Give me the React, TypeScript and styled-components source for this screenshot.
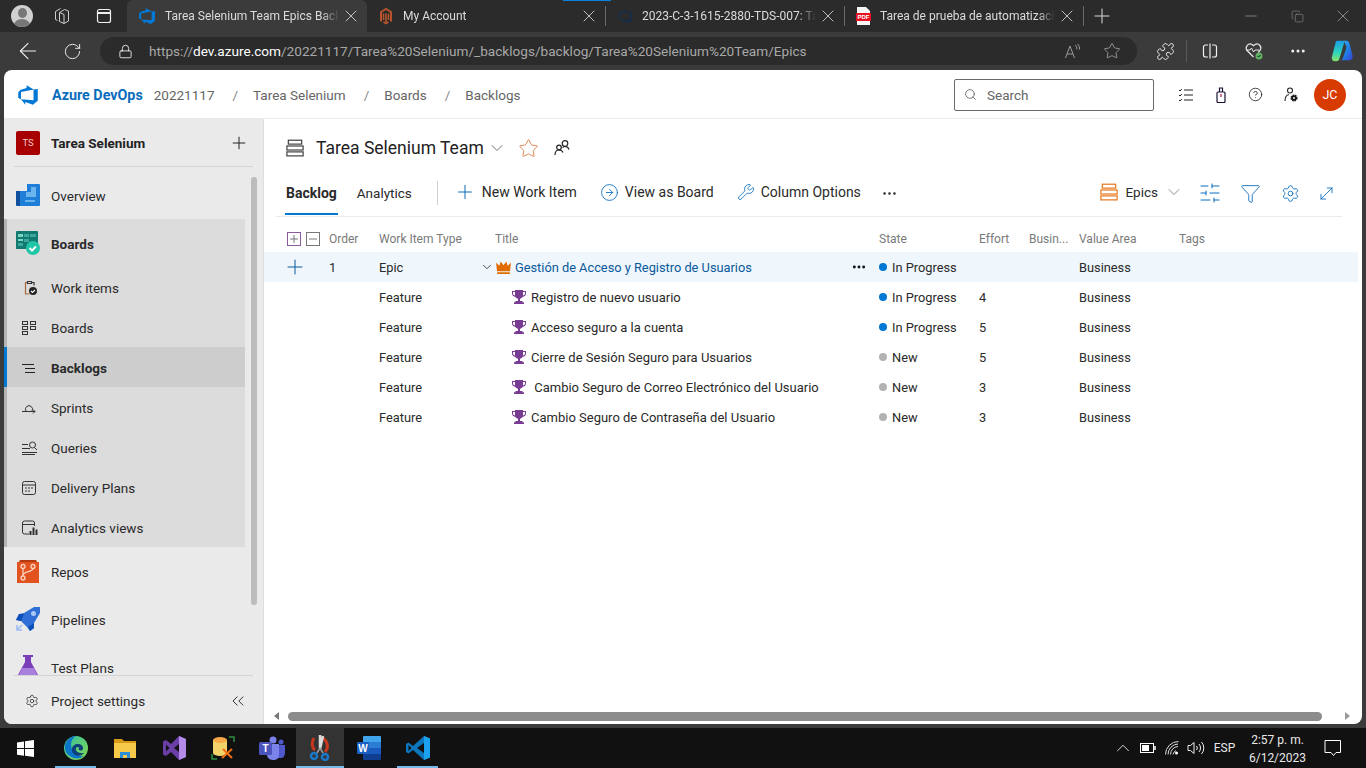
import { ReactNode } from "react";
import styled, { createGlobalStyle } from "styled-components";
import {
  ArrowLeft,
  ChevronDown,
  ChevronsLeft,
  ChevronUp,
  CircleArrowRight,
  CircleHelp,
  Copy,
  Ellipsis,
  Funnel,
  Lock,
  Minus,
  MoveDiagonal,
  Plus,
  Puzzle,
  RotateCw,
  Search,
  Settings,
  SlidersHorizontal,
  Star,
  Wrench,
  X,
} from "lucide-react";

const FONT = `Roboto, "Liberation Sans", sans-serif`;

const GlobalStyle = createGlobalStyle`
  html, body { margin: 0; padding: 0; background: #3b3b3b; }
  * { box-sizing: border-box; }
  body { font-family: ${FONT}; font-size: 13px; overflow: hidden; }
`;

const LOGO =
  "M17 4v9.74l-4 3.28-6.2-2.26V17l-3.51-4.59 10.23.8V4.44zm-3.41.49L7.85 1v2.29L2.58 4.84 1 6.87v4.61l2.26 1V6.57z";

const AzureLogo = ({ size = 18, color = "#0078d4" }: any) => (
  <svg width={size} height={size} viewBox="0 0 18 18" style={{ flex: "none" }}>
    <path fill={color} d={LOGO} />
  </svg>
);

const MagentoIcon = () => (
  <svg width="16" height="18" viewBox="0 0 16 18" style={{ flex: "none" }}>
    <path fill="none" stroke="#b5532c" strokeWidth="2" d="M3 14.500V5l5-3 5 3v9.500" />
    <path fill="none" stroke="#b5532c" strokeWidth="1.600" d="M8 16.500V6.500M5.500 13V6.500M10.500 13V6.500M5.500 15l2.500 1.500 2.500-1.500" />
  </svg>
);

const PdfIcon = () => (
  <svg width="15" height="18" viewBox="0 0 15 18" style={{ flex: "none" }}>
    <path fill="#f5f5f5" d="M1 0h9l4 4v14H1z" />
    <rect x="0" y="6" width="15" height="8" fill="#e81123" />
    <text x="7.500" y="12.300" fontSize="6" fontWeight="700" fill="#fff" textAnchor="middle" fontFamily="Liberation Sans">PDF</text>
  </svg>
);

const WorkspaceIcon = () => (
  <svg width="18" height="18" viewBox="0 0 18 18" fill="none" stroke="#cfcfcf" strokeWidth="1">
    <path d="M6.500 5.500l5-3 4 1.500v10l-4.500 2.500-4.500-2z" />
    <path d="M6.500 5.500l4.500 2v9M4.500 13.500l-2-1v-8l5-3" />
  </svg>
);

const TabsIcon = () => (
  <svg width="16" height="16" viewBox="0 0 16 16" fill="none" stroke="#f0f0f0" strokeWidth="1.200">
    <rect x="1.500" y="1.500" width="13" height="13" rx="2" />
    <path d="M2 5h12" strokeWidth="2" />
  </svg>
);

const ReadAloudIcon = () => (
  <svg width="18" height="16" viewBox="0 0 18 16" fill="none" stroke="#9a9a9a" strokeWidth="1">
    <path d="M1.500 15L6 3l4.500 12M3 11h6" />
    <path d="M11 2c1.500 1 2 2.500 1.800 4.500M13.500 1c1.700 1.500 2.300 3.500 2 5.500" />
  </svg>
);

const SplitIcon = () => (
  <svg width="16" height="16" viewBox="0 0 16 16" fill="none" stroke="#f0f0f0" strokeWidth="1.200">
    <path d="M6 2H3.500a2 2 0 0 0-2 2v8a2 2 0 0 0 2 2H6M10 2h2.500a2 2 0 0 1 2 2v8a2 2 0 0 1-2 2H10M8 0.500v15" />
  </svg>
);

const HeartCheckIcon = () => (
  <svg width="20" height="20" viewBox="0 0 20 20" fill="none">
    <path stroke="#e8e8e8" strokeWidth="1.200" d="M9.500 16L3 9.500C.5 6 4.500 1.500 8 3.500l1.500 1.200L11 3.500c3.500-2 7.500 2 5 6l-2 2" />
    <path stroke="#e8e8e8" strokeWidth="1" d="M2 9h4l1.500-2 2 4 1.500-2h4" />
    <circle cx="15" cy="15" r="3.500" fill="#5fb15f" />
    <path stroke="#123" strokeWidth="1" d="M13.500 15l1 1 2-2" />
  </svg>
);

const CopilotIcon = () => (
  <svg width="24" height="24" viewBox="0 0 26 26">
    <defs>
      <linearGradient id="copA" x1="0" y1="0" x2="0" y2="1">
        <stop offset="0" stopColor="#1b9de8" />
        <stop offset="0.6" stopColor="#2fd6b8" />
        <stop offset="1" stopColor="#8be06a" />
      </linearGradient>
      <linearGradient id="copB" x1="0" y1="0" x2="1" y2="1">
        <stop offset="0" stopColor="#35b8f5" />
        <stop offset="0.55" stopColor="#1e7fe8" />
        <stop offset="1" stopColor="#3a3fd0" />
      </linearGradient>
    </defs>
    <path fill="url(#copA)" d="M8 2h8L10 22c-.5 1.500-1.500 2-3 2H5c-2 0-3.500-1.800-3-4L6 4c.3-1.200 1-2 2-2z" />
    <path fill="url(#copB)" d="M15 2h3c1.500 0 2.500 1 3 2.500l3.500 14c.5 2.500-1 4.500-3.500 4.500h-10c1.500 0 2.500-1 3-2.500L18 9z" />
  </svg>
);

const ProgressIcon = () => (
  <svg width="16" height="14" viewBox="0 0 16 14" fill="none" stroke="#222" strokeWidth="1">
    <path d="M1 2l1 1 1.800-2M1 7l1 1 1.800-2M1 12l1 1 1.800-2" />
    <path d="M6 2h9M6 7h9M6 12h9" strokeWidth="1.200" />
  </svg>
);

const BagIcon = () => (
  <svg width="12" height="16" viewBox="0 0 12 16" fill="none" stroke="#1a1030" strokeWidth="1.200">
    <rect x="2" y="5" width="8" height="10.500" rx="1" />
    <path d="M4.500 5V1h3v4" />
    <path d="M6 7v3" stroke="#b01048" />
  </svg>
);

const UserGearIcon = () => (
  <svg width="16" height="16" viewBox="0 0 16 16" fill="none" stroke="#222" strokeWidth="1.100">
    <circle cx="7" cy="3.500" r="2.500" />
    <path d="M6 7.500C3 8 2 10.500 2 14" />
    <circle cx="11" cy="11" r="2.800" fill="#111" strokeWidth="1.600" strokeDasharray="1.500 .8" />
    <circle cx="11" cy="11" r="1" fill="#fff" stroke="none" />
  </svg>
);

const BacklogIcon = ({ color = "#444", size = 20 }: any) => (
  <svg width={size} height={size} viewBox="0 0 18 18" fill="none" stroke={color} strokeWidth="1.100">
    <rect x="3" y="2" width="12" height="3.500" />
    <rect x="1.700" y="7.200" width="14.600" height="3.600" />
    <rect x="1.700" y="12.500" width="14.600" height="3.600" />
  </svg>
);

const PeopleIcon = () => (
  <svg width="18" height="18" viewBox="0 0 18 18" fill="none" stroke="#222" strokeWidth="1.200">
    <circle cx="12" cy="4.500" r="2.800" />
    <circle cx="6" cy="8.500" r="2.300" />
    <path d="M2 16c0-3 1.500-5 4-5s3.500 1 4 2.500M9.500 8.500c.8-.6 1.600-1 2.500-1 2 0 3.500 1 4 3" />
  </svg>
);

const BoxIcon = ({ kind }: { kind: "plus" | "minus" }) => (
  <svg width="14" height="14" viewBox="0 0 14 14" fill="none">
    <rect x=".5" y=".5" width="13" height="13" stroke={kind === "plus" ? "#8a5a9c" : "#777"} />
    <path stroke="#777" d={kind === "plus" ? "M3 7h8M7 3v8" : "M3 7h8"} />
  </svg>
);

const CrownIcon = () => (
  <svg width="15" height="13" viewBox="0 0 16 14" style={{ flex: "none" }}>
    <path fill="#e06c00" d="M0 2l3.500 3L5 .5l3 4 3-4 1.500 4.500L16 2l-1 9H1zM1.200 12h13.600v2H1.200z" />
  </svg>
);

const TrophyIcon = () => (
  <svg width="14" height="14" viewBox="0 0 14 14" style={{ flex: "none" }}>
    <path fill="#773b93" d="M3 0h8v1h3v2.500C14 5.500 12.500 6.500 10.800 6.700 10.200 7.800 9.200 8.500 8 8.800V11h2.500v1.200H12V14H2v-1.800h1.500V11H6V8.800C4.800 8.500 3.800 7.800 3.200 6.700 1.500 6.500 0 5.500 0 3.500V1h3zM1 2v1.500C1 4.500 1.800 5.300 3 5.600V2zm10 0v3.600c1.200-.3 2-1.100 2-2.100V2z" />
  </svg>
);

const ClipCheckIcon = () => (
  <svg width="16" height="16" viewBox="0 0 16 16" fill="none">
    <path stroke="#a6683a" strokeWidth="1.200" d="M5.500 2.500H3.500v11.500h4" />
    <path stroke="#333" strokeWidth="1.200" d="M5.500 1.500h4v2h-4zM10 2.500h2v3" />
    <circle cx="11" cy="11" r="4" fill="#222" />
    <path stroke="#fff" strokeWidth="1.100" d="M9 11l1.500 1.500L13 10" />
  </svg>
);

const KanbanIcon = () => (
  <svg width="14" height="14" viewBox="0 0 14 14" fill="none" stroke="#333">
    <rect x=".5" y=".5" width="5" height="3" />
    <rect x=".5" y="5.500" width="5" height="3" />
    <rect x=".5" y="10.500" width="5" height="3" />
    <rect x="8.500" y=".5" width="5" height="3" />
    <rect x="8.500" y="5.500" width="5" height="3" />
  </svg>
);

const LinesIcon = () => (
  <svg width="14" height="14" viewBox="0 0 14 14" stroke="#222">
    <path d="M0 3.500h12M3 7.500h10M3 11.500h10" />
  </svg>
);

const SprintIcon = () => (
  <svg width="14" height="14" viewBox="0 0 14 14" fill="none" stroke="#333">
    <path d="M0 10.500h13M11 8.500l2 2-2 2M4 10a3.500 3.500 0 1 1 6 0" />
  </svg>
);

const QueryIcon = () => (
  <svg width="16" height="14" viewBox="0 0 16 14" fill="none" stroke="#333">
    <path d="M0 3.500h6M0 7.500h8M0 11.500h15M0 13.500h13" />
    <circle cx="10.500" cy="4" r="3" />
    <path d="M12.500 6.500l2.500 2.500" />
  </svg>
);

const PlanIcon = () => (
  <svg width="14" height="14" viewBox="0 0 14 14" fill="none" stroke="#333">
    <rect x=".5" y=".5" width="13" height="13" rx="2" />
    <path d="M.5 4h13M3 7h2M6 7h2M9 7h2M3 10h2M6 10h2" />
  </svg>
);

const ViewsIcon = () => (
  <svg width="16" height="16" viewBox="0 0 16 16" fill="none" stroke="#333">
    <path d="M7 14H2.500a2 2 0 0 1-2-2V3a2 2 0 0 1 2-2h8a2 2 0 0 1 2 2v3M.5 4.500h12" />
    <path d="M8.500 15V11M11.500 15V7.500M14.500 15V9.500" strokeWidth="2" />
  </svg>
);

const OverviewIcon = () => (
  <svg width="24" height="24" viewBox="0 0 24 24">
    <path fill="#0f4f9e" d="M0 8h5v15H1a1 1 0 0 1-1-1z" />
    <path fill="#1f7fd8" d="M4 8h7V1h12a1 1 0 0 1 1 1v20a1 1 0 0 1-1 1H4z" />
    <path fill="#6cb4ee" d="M10 14V9h5V4h5v10z" />
    <path fill="#6cb4ee" d="M9 17h10v2H9z" />
  </svg>
);

const BoardsIcon = () => (
  <svg width="24" height="24" viewBox="0 0 24 24">
    <path fill="#137a72" d="M0 1a1 1 0 0 1 1-1h20a1 1 0 0 1 1 1v17H0z" />
    <path fill="#7bd4c2" d="M2 3h5v3H2zM2 8h5v2H2z" />
    <path fill="#3aa89a" d="M8 3h5v3H8zM14 3h6v3h-6zM2 12h5v3H2zM8 8h5v3H8z" />
    <circle cx="17" cy="17" r="7" fill="#1fc7a8" />
    <path fill="none" stroke="#fff" strokeWidth="2" d="M13.500 17l2.500 2.500 4-4" />
  </svg>
);

const ReposIcon = () => (
  <svg width="24" height="24" viewBox="0 0 24 24">
    <path fill="#b23a0e" d="M3 3l1-2h16l1 2z" />
    <path fill="#e2531f" d="M1 3h22v21H1z" />
    <g fill="none" stroke="#fbd3c0" strokeWidth="1.300">
      <circle cx="7" cy="7.500" r="2" />
      <circle cx="17" cy="7.500" r="2" />
      <circle cx="7" cy="19" r="2" />
      <path d="M7 9.500V17M17 9.500c0 4-10 2-10 7" />
    </g>
  </svg>
);

const PipelinesIcon = () => (
  <svg width="24" height="24" viewBox="0 0 24 24">
    <path fill="#2f6fd6" d="M8 6L18 0h6v6L18 16v5l-4 3-3-4-6-6-5-1 3-6z" />
    <path fill="#0e4fb8" d="M14 24l4-3v-5l-6 4zM0 13l5 1 3-7-5 0z" />
    <circle cx="17.500" cy="6.500" r="2.500" fill="#a9c8f5" />
    <path fill="none" stroke="#9dbdf2" strokeWidth="1.600" d="M1 18v5h5M1 23l5-5" />
  </svg>
);

const TestIcon = () => (
  <svg width="24" height="24" viewBox="0 0 24 24">
    <path fill="#7a3fb8" d="M7 0h10v2h-2v5l7 13a2 2 0 0 1-2 3H4a2 2 0 0 1-2-3L9 7V2H7z" />
    <path fill="#a97fdd" d="M6 13h12l4 9H2z" />
  </svg>
);

const WindowsIcon = () => (
  <svg width="17" height="17" viewBox="0 0 17 17" fill="#fff">
    <path d="M0 2.400l7-1v6.600H0zM8 1.300L17 0v8H8zM0 9h7v6.700l-7-1zM8 9h9v8l-9-1.300z" />
  </svg>
);

const EdgeIcon = () => (
  <svg width="24" height="24" viewBox="0 0 24 24">
    <defs>
      <linearGradient id="edgeA" x1="0" y1="0" x2="1" y2="1">
        <stop offset="0" stopColor="#35c1a0" />
        <stop offset="1" stopColor="#7fd654" />
      </linearGradient>
    </defs>
    <circle cx="12" cy="12" r="12" fill="url(#edgeA)" />
    <path fill="#0c74c9" d="M1 9C3 3 8 0 12 0 7 3 6 8 8 13c1.500 5 7 8 12 7a12 12 0 0 1-19-11z" />
    <path fill="#0d3f78" d="M8 13c0-3 3-5 6-5 3 0 5 2 5 4s-1 2.500-2 2.500c-2 0-3-1-2-2.500 0-1-2-1.500-3 0-1 2 1 6 8 5-2 3-8 4-11 0-.8-1-1-2.500-1-4z" />
  </svg>
);

const FolderIcon = () => (
  <svg width="22" height="20" viewBox="0 0 22 20">
    <path fill="#d89a14" d="M0 1h8l2 2h12v3H0z" />
    <path fill="#f7c94a" d="M0 5h22v15H0z" />
    <path fill="#2d8fd6" d="M6 20v-6h10v6h-3v-3H9v3z" />
  </svg>
);

const StudioIcon = () => (
  <svg width="24" height="24" viewBox="0 0 24 24">
    <path fill="#6a3fa6" d="M17 0l7 3v18l-7 3-8-8-5 4-3-1.500V5.500L4 4l5 4zM4 8.500v7l3.500-3.500zM12 12l5 4V8z" />
    <path fill="#b38ae8" d="M17 0l7 3v18l-7 3V16l0-8z" />
  </svg>
);

const DbToolIcon = () => (
  <svg width="24" height="24" viewBox="0 0 24 24" fill="none">
    <path fill="#f3d26a" d="M2 4h14v13a7 3 0 0 1-14 0z" />
    <ellipse cx="9" cy="4" rx="7" ry="3" fill="#f7a94a" />
    <path stroke="#2f8f3f" strokeWidth="1.500" d="M18 1h5v5M1 18v5h5" />
    <path stroke="#f07010" strokeWidth="2" d="M11 22l10-9M12 13l9 9" />
  </svg>
);

const TeamsIcon = () => (
  <svg width="26" height="24" viewBox="0 0 26 24">
    <circle cx="14" cy="4" r="3.500" fill="#7b83eb" />
    <circle cx="22" cy="6" r="2.500" fill="#5059c9" />
    <path fill="#5059c9" d="M17 9h9v8c0 3-2 5-4 5h-3z" />
    <path fill="#7b83eb" d="M8 8h12v11c0 3-2 5-6 5s-6-3-6-5z" />
    <rect x="0" y="6" width="13" height="13" rx="1.500" fill="#4b53bc" />
    <text x="6.500" y="16" fontSize="10" fontWeight="700" fill="#fff" textAnchor="middle" fontFamily="Liberation Sans">T</text>
  </svg>
);

const SnipIcon = () => (
  <svg width="24" height="26" viewBox="0 0 24 26" fill="none">
    <path stroke="#c8381c" strokeWidth="3" d="M11 2a9 9 0 0 1 6 15M6 3C3 8 4 13 7 15" />
    <path stroke="#ddd" strokeWidth="2.500" d="M12 0v13M15 1l-3 13" />
    <path stroke="#999" strokeWidth="1.500" d="M12 13l-3 5M12 13l3 5" />
    <circle cx="6" cy="21" r="3" stroke="#1a78c8" strokeWidth="2.500" />
    <circle cx="17" cy="22" r="3" stroke="#1a78c8" strokeWidth="2.500" />
  </svg>
);

const WordIcon = () => (
  <svg width="24" height="24" viewBox="0 0 24 24">
    <path fill="#41a5ee" d="M7 0h16a1 1 0 0 1 1 1v5H6V1a1 1 0 0 1 1-1z" />
    <path fill="#2b7cd3" d="M6 6h18v6H6z" />
    <path fill="#185abd" d="M6 12h18v6H6z" />
    <path fill="#103f91" d="M6 18h18v5a1 1 0 0 1-1 1H7a1 1 0 0 1-1-1z" />
    <rect x="0" y="6" width="12" height="12" rx="1" fill="#1a5fc4" />
    <text x="6" y="15.500" fontSize="10" fontWeight="700" fill="#fff" textAnchor="middle" fontFamily="Liberation Sans">W</text>
  </svg>
);

const VsCodeIcon = () => (
  <svg width="24" height="24" viewBox="0 0 24 24">
    <path fill="#0d76bd" d="M18 0L7 10 2.500 6.500 0 8v8l2.500 1.500L7 14l11 10 6-2.500v-19zM2.500 15V9l3 3zM18 17l-7-5 7-5z" />
    <path fill="#1ba1ee" d="M18 0l6 2.500v19L18 24V17l0-10z" />
  </svg>
);

const BatteryIcon = () => (
  <svg width="16" height="10" viewBox="0 0 16 10" fill="none" stroke="#fff">
    <rect x=".5" y=".5" width="13" height="9" />
    <rect x="2" y="2" width="7" height="6" fill="#fff" stroke="none" />
    <path d="M15 3v4" strokeWidth="1.500" />
  </svg>
);

const WifiIcon = () => (
  <svg width="14" height="14" viewBox="0 0 14 14" fill="none" stroke="#ddd">
    <path d="M.5 13.500a13 13 0 0 1 13-13M3 13.500A10.500 10.500 0 0 1 13 3M5.500 13.500a8 8 0 0 1 7.500-8M8 13.500a5.500 5.500 0 0 1 3-4" />
    <circle cx="11.500" cy="12" r="1.500" fill="#fff" stroke="none" />
  </svg>
);

const SpeakerIcon = () => (
  <svg width="18" height="14" viewBox="0 0 18 14" fill="none" stroke="#eee">
    <path d="M1 4.500h2.500L7 1.500v11l-3.500-3H1z" />
    <path d="M9.500 5a3 3 0 0 1 0 4M12 3a6 6 0 0 1 0 8M14.500 1a9 9 0 0 1 0 12" />
  </svg>
);

const NoticeIcon = () => (
  <svg width="18" height="17" viewBox="0 0 18 17" fill="none" stroke="#fff">
    <path d="M.5.5h15.500v12h-4.500L9 15.500l-2.500-3H.5z" transform="translate(.5)" />
  </svg>
);

const Screen = styled.div`
  width: 1366px;
  height: 768px;
  display: flex;
  flex-direction: column;
  background: #3b3b3b;
  overflow: hidden;
  position: relative;
`;

const TabStrip = styled.div`
  height: 32px;
  flex: none;
  display: flex;
  align-items: stretch;
  background: #2b2b2b;
  color: #dcdcdc;
  position: relative;
`;

const LoadBar = styled.div`
  position: absolute;
  left: 563px;
  top: 0;
  width: 48px;
  height: 1px;
  background: #0a84e0;
`;

const StripSlot = styled.div<{ $w: number }>`
  width: ${(p) => p.$w}px;
  flex: none;
  display: flex;
  align-items: center;
  justify-content: center;
`;

const ProfileDot = styled.div`
  width: 22px;
  height: 22px;
  border-radius: 50%;
  background: #d0d0d0;
  position: relative;
  overflow: hidden;
  &::before {
    content: "";
    position: absolute;
    left: 7px;
    top: 3px;
    width: 9px;
    height: 10px;
    border-radius: 50%;
    background: #777;
  }
  &::after {
    content: "";
    position: absolute;
    left: 3px;
    top: 14px;
    width: 16px;
    height: 12px;
    border-radius: 50%;
    background: #777;
  }
`;

const Tab = styled.div<{ $active?: boolean; $w: number; $sep?: boolean }>`
  width: ${(p) => p.$w}px;
  flex: none;
  display: flex;
  align-items: center;
  gap: 9px;
  padding: 0 6px 0 11px;
  background: ${(p) => (p.$active ? "#3b3b3b" : "transparent")};
  border-radius: ${(p) => (p.$active ? "6px 6px 0 0" : "0")};
  border-right: ${(p) => (p.$sep ? "1px solid #6a6a6a" : "0")};
  background-clip: padding-box;
  margin: ${(p) => (p.$active ? "0" : "6px 0")};
  font-size: 12px;
  white-space: nowrap;
`;

const TabTitle = styled.span`
  flex: 1;
  overflow: hidden;
  -webkit-mask-image: linear-gradient(to right, #000 90%, transparent);
  mask-image: linear-gradient(to right, #000 90%, transparent);
`;

const TabClose = styled(X)`
  flex: none;
  margin-left: -7px;
`;

const WindowControls = styled.div`
  margin-left: auto;
  display: flex;
  align-items: center;
  color: #9a9a9a;
`;

const BrowserBar = styled.div`
  height: 38px;
  flex: none;
  display: flex;
  align-items: center;
  padding-left: 6px;
  background: #3b3b3b;
  color: #efefef;
`;

const BarSlot = styled.div`
  width: 44px;
  flex: none;
  display: flex;
  align-items: center;
  justify-content: center;
`;

const AddressBar = styled.div`
  width: 1037px;
  height: 28px;
  margin: 0 6px;
  flex: none;
  display: flex;
  align-items: center;
  padding: 0 16px 0 18px;
  background: #2b2b2b;
  border-radius: 14px;
  font-size: 13.600px;
  color: #a8a8a8;
`;

const UrlText = styled.span`
  margin-left: 16px;
  flex: 1;
  white-space: nowrap;
  b {
    font-weight: 400;
    color: #fff;
  }
`;

const AddressStar = styled(Star)`
  margin-left: 21px;
`;

const BarDivider = styled.div`
  width: 1px;
  height: 22px;
  background: #5a5a5a;
  margin: 0 1px 0 -1px;
`;

const Page = styled.div`
  height: 654px;
  flex: none;
  margin: 0 4px 4px;
  background: #fff;
  border-radius: 8px;
  overflow: hidden;
  display: flex;
  flex-direction: column;
  color: #222;
`;

const TopBar = styled.div`
  height: 49px;
  flex: none;
  display: flex;
  align-items: center;
  padding: 1px 16px 0 13px;
  border-bottom: 1px solid #eaeaea;
`;

const BrandName = styled.span`
  margin-left: 13px;
  font-weight: 700;
  font-size: 14.300px;
  color: #0a6cbd;
`;

const Crumb = styled.span`
  margin-left: 11px;
  font-size: 13.500px;
  color: #666;
  & + &::before {
    content: "/";
    margin: 0 15px 0 7px;
    color: #888;
  }
`;

const SearchBox = styled.div`
  margin-left: auto;
  width: 200px;
  height: 32px;
  display: flex;
  align-items: center;
  gap: 10px;
  padding-left: 9px;
  border: 1px solid #6a6a6a;
  border-radius: 2px;
  color: #666;
  font-size: 13.500px;
`;

const TopIcons = styled.div`
  display: flex;
  margin-left: 14px;
`;

const TopIconSlot = styled.div`
  width: 35px;
  display: flex;
  align-items: center;
  justify-content: center;
  color: #222;
`;

const UserAvatar = styled.div`
  width: 32px;
  height: 32px;
  margin-left: 6px;
  border-radius: 50%;
  background: #d83b01;
  color: #fff;
  display: flex;
  align-items: center;
  justify-content: center;
  font-size: 12.500px;
`;

const Body = styled.div`
  flex: 1;
  min-height: 0;
  display: flex;
`;

const Sidebar = styled.aside`
  width: 260px;
  flex: none;
  background: #eaeaea;
  border-right: 1px solid #dedede;
  display: flex;
  flex-direction: column;
`;

const ProjectHead = styled.div`
  height: 48px;
  flex: none;
  margin: 0 10px;
  padding: 0 4px 0 2px;
  display: flex;
  align-items: center;
  border-bottom: 1px solid #d4d4d4;
  font-weight: 700;
  font-size: 13.500px;
`;

const ProjectBadge = styled.div`
  width: 24px;
  height: 24px;
  margin-right: 11px;
  border-radius: 2px;
  background: #a80000;
  color: #f3c6c6;
  font-size: 9.500px;
  font-weight: 400;
  display: flex;
  align-items: center;
  justify-content: center;
`;

const HeadPlus = styled.div`
  margin-left: auto;
  display: flex;
  color: #222;
`;

const NavArea = styled.nav`
  flex: 1;
  min-height: 0;
  overflow: hidden;
  position: relative;
  padding-top: 4px;
`;

const NavThumb = styled.div`
  position: absolute;
  left: 247px;
  top: 10px;
  width: 6px;
  height: 428px;
  border-radius: 3px;
  background: #bcbcbc;
`;

const NavTop = styled.div<{ $bold?: boolean }>`
  width: 241px;
  height: 48px;
  display: flex;
  align-items: center;
  gap: 11px;
  padding-left: 12px;
  font-size: 13.500px;
  font-weight: ${(p) => (p.$bold ? 700 : 400)};
  color: #2a2a2a;
  span {
    padding-top: 2px;
  }
`;

const NavGroup = styled.div`
  width: 241px;
  background: #dcdcdc;
  border-left: 3px solid #b4b4b4;
  ${NavTop} {
    padding-left: 9px;
  }
`;

const NavSub = styled.div<{ $selected?: boolean }>`
  height: 40px;
  margin-left: -3px;
  display: flex;
  align-items: center;
  border-left: 3px solid ${(p) => (p.$selected ? "#0078d4" : "#b4b4b4")};
  background: ${(p) => (p.$selected ? "#cdcdcd" : "transparent")};
  font-size: 13.500px;
  font-weight: ${(p) => (p.$selected ? 700 : 400)};
  color: #2a2a2a;
  padding-top: 1px;
`;

const NavSubIcon = styled.span`
  width: 44px;
  padding-left: 15px;
  flex: none;
  display: flex;
  align-items: center;
`;

const NavFoot = styled.div`
  height: 49px;
  flex: none;
  margin: 0 10px;
  padding: 2px 5px 0 0;
  display: flex;
  align-items: center;
  border-top: 1px solid #d4d4d4;
  font-size: 13.500px;
  color: #2a2a2a;
`;

const FootIcon = styled.span`
  width: 37px;
  padding-left: 11px;
  display: flex;
`;

const FootEnd = styled.span`
  margin-left: auto;
  display: flex;
  color: #333;
`;

const Main = styled.main`
  flex: 1;
  min-width: 0;
  display: flex;
  flex-direction: column;
`;

const TeamHead = styled.div`
  height: 51px;
  flex: none;
  padding: 7px 0 0 21px;
  display: flex;
  align-items: center;
  font-size: 17.500px;
  color: #222;
`;

const TeamName = styled.span`
  margin-left: 11px;
`;

const TeamIcon = styled.span<{ $ml: number }>`
  margin-left: ${(p) => p.$ml}px;
  display: flex;
`;

const CommandRow = styled.div`
  height: 47px;
  flex: none;
  margin: 0 20px 0 12px;
  padding-left: 10px;
  display: flex;
  align-items: center;
  border-bottom: 1px solid #eaeaea;
`;

const PivotTab = styled.div<{ $on?: boolean }>`
  height: 46px;
  margin-right: 20px;
  display: flex;
  align-items: center;
  position: relative;
  font-size: ${(p) => (p.$on ? 14 : 13.500)}px;
  font-weight: ${(p) => (p.$on ? 700 : 400)};
  color: #2a2a2a;
  &::after {
    content: "";
    display: ${(p) => (p.$on ? "block" : "none")};
    position: absolute;
    left: -1px;
    right: -1px;
    bottom: 1px;
    height: 2px;
    background: #0078d4;
  }
`;

const CmdDivider = styled.div`
  width: 1px;
  height: 24px;
  margin: 0 16px 0 5px;
  background: #cfcfcf;
`;

const CmdButton = styled.div`
  display: flex;
  align-items: center;
  gap: 6px;
  margin-right: 23px;
  padding-bottom: 2px;
  font-size: 14px;
  color: #2a2a2a;
`;

const CmdIcon = styled.span`
  display: flex;
  color: #0a6cbd;
`;

const CmdMore = styled(Ellipsis)`
  margin-left: -3px;
  color: #222;
`;

const CmdEnd = styled.div`
  margin-left: auto;
  display: flex;
  align-items: center;
`;

const LevelPicker = styled.div`
  display: flex;
  align-items: center;
  gap: 6px;
  margin-right: 6px;
  padding-bottom: 2px;
  font-size: 13.500px;
  color: #2a2a2a;
`;

const CmdSlot = styled.div<{ $w: number }>`
  width: ${(p) => p.$w}px;
  display: flex;
  justify-content: center;
  color: #0a6cbd;
`;

const Table = styled.div`
  flex: 1;
  min-height: 0;
  padding-right: 4px;
`;

const COLUMNS = "65px 50px 101px 399px 100px 50px 50px 100px 1fr";

const HeaderRow = styled.div`
  height: 35px;
  padding-top: 9px;
  display: grid;
  grid-template-columns: ${COLUMNS};
  align-items: center;
  font-size: 12px;
  color: #7a7a7a;
`;

const HeadBoxes = styled.div`
  display: flex;
  gap: 5px;
  padding-left: 23px;
`;

const HeadTitle = styled.div`
  padding-left: 15px;
`;

const Row = styled.div<{ $hover?: boolean }>`
  height: 30px;
  display: grid;
  grid-template-columns: ${COLUMNS};
  align-items: center;
  font-size: 12.800px;
  color: #2a2a2a;
  background: ${(p) => (p.$hover ? "#eff6fc" : "transparent")};
`;

const AddCell = styled.div`
  padding-left: 19px;
  display: flex;
  color: #0a5a9c;
`;

const TitleCell = styled.div<{ $child?: boolean }>`
  display: flex;
  align-items: center;
  gap: 4px;
  padding-left: ${(p) => (p.$child ? 32 : 0)}px;
  padding-right: 12px;
  white-space: pre;
`;

const RowChevron = styled(ChevronDown)`
  flex: none;
  margin-right: -2px;
  color: #444;
`;

const EpicLink = styled.span`
  color: #0a5a9c;
`;

const FeatureTitle = styled.span`
  margin-left: 1px;
  font-size: 13px;
`;

const RowMore = styled.span`
  margin-left: auto;
  display: flex;
  color: #111;
`;

const StateCell = styled.div`
  display: flex;
  align-items: center;
  gap: 5px;
`;

const StateDot = styled.span<{ $c: string }>`
  width: 8px;
  height: 8px;
  border-radius: 50%;
  background: ${(p) => p.$c};
`;

const HScroll = styled.div`
  height: 16px;
  flex: none;
  padding: 3px 12px 3px 10px;
  display: flex;
  align-items: center;
`;

const ScrollThumb = styled.div`
  width: 1034px;
  height: 9px;
  margin: 0 auto 0 9px;
  border-radius: 5px;
  background: #8c8c8c;
`;

const ScrollArrow = styled.span<{ $dir: "l" | "r" }>`
  width: 0;
  height: 0;
  border-top: 4.500px solid transparent;
  border-bottom: 4.500px solid transparent;
  ${(p) =>
    p.$dir === "l"
      ? "border-right: 5px solid #777;"
      : "border-left: 5px solid #999;"}
`;

const Taskbar = styled.div`
  height: 40px;
  flex: none;
  display: flex;
  align-items: stretch;
  background: #111;
  color: #f0f0f0;
`;

const TaskSlot = styled.div<{ $w?: number; $on?: boolean; $open?: boolean }>`
  width: ${(p) => p.$w ?? 49}px;
  flex: none;
  display: flex;
  align-items: center;
  justify-content: center;
  background: ${(p) => (p.$on ? "#333" : "transparent")};
  position: relative;
  &::after {
    content: "";
    display: ${(p) => (p.$open ? "block" : "none")};
    position: absolute;
    left: ${(p) => (p.$on ? 0 : 4)}px;
    right: ${(p) => (p.$on ? 0 : 4)}px;
    bottom: 0;
    height: 2px;
    background: #76b9ed;
  }
`;

const Tray = styled.div`
  margin-left: auto;
  padding-right: 16px;
  display: flex;
  align-items: center;
  font-size: 12px;
  color: #e8e8e8;
`;

const TrayIcon = styled.span<{ $w: number }>`
  width: ${(p) => p.$w}px;
  display: flex;
  justify-content: center;
`;

const Clock = styled.div`
  width: 73px;
  padding-top: 2px;
  display: flex;
  flex-direction: column;
  align-items: center;
  line-height: 18px;
`;

const Notice = styled.div`
  width: 34px;
  display: flex;
  justify-content: center;
  margin-left: 2px;
`;

const tabs = [
  { w: 240, active: true, icon: <AzureLogo size={18} />, title: "Tarea Selenium Team Epics Backlog" },
  { w: 239, sep: true, icon: <MagentoIcon />, title: "My Account" },
  { w: 239, sep: true, icon: <AzureLogo size={16} color="#1a2c44" />, title: "2023-C-3-1615-2880-TDS-007: Tarea" },
  { w: 239, sep: true, icon: <PdfIcon />, title: "Tarea de prueba de automatización" },
];

const subItems: { label: string; icon: ReactNode; selected?: boolean }[] = [
  { label: "Work items", icon: <ClipCheckIcon /> },
  { label: "Boards", icon: <KanbanIcon /> },
  { label: "Backlogs", icon: <LinesIcon />, selected: true },
  { label: "Sprints", icon: <SprintIcon /> },
  { label: "Queries", icon: <QueryIcon /> },
  { label: "Delivery Plans", icon: <PlanIcon /> },
  { label: "Analytics views", icon: <ViewsIcon /> },
];

const features = [
  { title: "Registro de nuevo usuario", state: "In Progress", effort: "4" },
  { title: "Acceso seguro a la cuenta", state: "In Progress", effort: "5" },
  { title: "Cierre de Sesión Seguro para Usuarios", state: "New", effort: "5" },
  { title: " Cambio Seguro de Correo Electrónico del Usuario", state: "New", effort: "3" },
  { title: "Cambio Seguro de Contraseña del Usuario", state: "New", effort: "3" },
];

const stateColor = (s: string) => (s === "New" ? "#b2b2b2" : "#0078d4");

export default function App() {
  return (
    <Screen>
      <GlobalStyle />
      <TabStrip>
        <LoadBar />
        <StripSlot $w={44}><ProfileDot /></StripSlot>
        <StripSlot $w={36}><WorkspaceIcon /></StripSlot>
        <StripSlot $w={47}><TabsIcon /></StripSlot>
        {tabs.map((t) => (
          <Tab key={t.title} $w={t.w} $active={t.active} $sep={t.sep}>
            {t.icon}
            <TabTitle>{t.title}</TabTitle>
            <TabClose size={20} strokeWidth={1} />
          </Tab>
        ))}
        <StripSlot $w={36}><Plus size={24} strokeWidth={1} /></StripSlot>
        <WindowControls>
          <StripSlot $w={46}><Minus size={18} strokeWidth={1} /></StripSlot>
          <StripSlot $w={46}><Copy size={13} strokeWidth={1} /></StripSlot>
          <StripSlot $w={46}><X size={20} strokeWidth={1} /></StripSlot>
        </WindowControls>
      </TabStrip>

      <BrowserBar>
        <BarSlot><ArrowLeft size={26} strokeWidth={1} /></BarSlot>
        <BarSlot><RotateCw size={19} strokeWidth={1.2} /></BarSlot>
        <AddressBar>
          <Lock size={15} strokeWidth={1.4} color="#f0f0f0" />
          <UrlText>
            https://<b>dev.azure.com</b>/20221117/Tarea%20Selenium/_backlogs/backlog/Tarea%20Selenium%20Team/Epics
          </UrlText>
          <ReadAloudIcon />
          <AddressStar size={18} strokeWidth={1.1} color="#a8a8a8" />
        </AddressBar>
        <BarSlot><Puzzle size={19} strokeWidth={1.2} /></BarSlot>
        <BarDivider />
        <BarSlot><SplitIcon /></BarSlot>
        <BarSlot><HeartCheckIcon /></BarSlot>
        <BarSlot><Ellipsis size={18} /></BarSlot>
        <BarSlot><CopilotIcon /></BarSlot>
      </BrowserBar>

      <Page>
        <TopBar>
          <AzureLogo size={22} />
          <BrandName>Azure DevOps</BrandName>
          <Crumb>20221117</Crumb>
          <Crumb>Tarea Selenium</Crumb>
          <Crumb>Boards</Crumb>
          <Crumb>Backlogs</Crumb>
          <SearchBox>
            <Search size={13} strokeWidth={1.6} />
            Search
          </SearchBox>
          <TopIcons>
            <TopIconSlot><ProgressIcon /></TopIconSlot>
            <TopIconSlot><BagIcon /></TopIconSlot>
            <TopIconSlot><CircleHelp size={15} strokeWidth={1.3} /></TopIconSlot>
            <TopIconSlot><UserGearIcon /></TopIconSlot>
          </TopIcons>
          <UserAvatar>JC</UserAvatar>
        </TopBar>

        <Body>
          <Sidebar>
            <ProjectHead>
              <ProjectBadge>TS</ProjectBadge>
              Tarea Selenium
              <HeadPlus><Plus size={20} strokeWidth={1.2} /></HeadPlus>
            </ProjectHead>
            <NavArea>
              <NavThumb />
              <NavTop><OverviewIcon /><span>Overview</span></NavTop>
              <NavGroup>
                <NavTop $bold><BoardsIcon /><span>Boards</span></NavTop>
                {subItems.map((s) => (
                  <NavSub key={s.label} $selected={s.selected}>
                    <NavSubIcon>{s.icon}</NavSubIcon>
                    {s.label}
                  </NavSub>
                ))}
              </NavGroup>
              <NavTop><ReposIcon /><span>Repos</span></NavTop>
              <NavTop><PipelinesIcon /><span>Pipelines</span></NavTop>
              <NavTop><TestIcon /><span>Test Plans</span></NavTop>
            </NavArea>
            <NavFoot>
              <FootIcon><Settings size={14} strokeWidth={1.3} /></FootIcon>
              Project settings
              <FootEnd><ChevronsLeft size={20} strokeWidth={1.2} /></FootEnd>
            </NavFoot>
          </Sidebar>

          <Main>
            <TeamHead>
              <BacklogIcon />
              <TeamName>Tarea Selenium Team</TeamName>
              <TeamIcon $ml={3}><ChevronDown size={20} strokeWidth={1} color="#555" /></TeamIcon>
              <TeamIcon $ml={11}><Star size={21} strokeWidth={1} color="#d9763e" /></TeamIcon>
              <TeamIcon $ml={14}><PeopleIcon /></TeamIcon>
            </TeamHead>

            <CommandRow>
              <PivotTab $on>Backlog</PivotTab>
              <PivotTab>Analytics</PivotTab>
              <CmdDivider />
              <CmdButton><CmdIcon><Plus size={22} strokeWidth={1.1} /></CmdIcon>New Work Item</CmdButton>
              <CmdButton><CmdIcon><CircleArrowRight size={19} strokeWidth={1.1} /></CmdIcon>View as Board</CmdButton>
              <CmdButton><CmdIcon><Wrench size={18} strokeWidth={1.1} /></CmdIcon>Column Options</CmdButton>
              <CmdMore size={17} strokeWidth={1.6} />
              <CmdEnd>
                <LevelPicker>
                  <BacklogIcon color="#e8781e" size={20} />
                  Epics
                  <ChevronDown size={20} strokeWidth={1} color="#777" />
                </LevelPicker>
                <CmdSlot $w={40}><SlidersHorizontal size={24} strokeWidth={1} /></CmdSlot>
                <CmdSlot $w={40}><Funnel size={21} strokeWidth={1} /></CmdSlot>
                <CmdSlot $w={40}><Settings size={19} strokeWidth={1.1} /></CmdSlot>
                <CmdSlot $w={32}><MoveDiagonal size={19} strokeWidth={1.1} /></CmdSlot>
              </CmdEnd>
            </CommandRow>

            <Table>
              <HeaderRow>
                <HeadBoxes><BoxIcon kind="plus" /><BoxIcon kind="minus" /></HeadBoxes>
                <div>Order</div>
                <div>Work Item Type</div>
                <HeadTitle>Title</HeadTitle>
                <div>State</div>
                <div>Effort</div>
                <div>Busin...</div>
                <div>Value Area</div>
                <div>Tags</div>
              </HeaderRow>

              <Row $hover>
                <AddCell><Plus size={24} strokeWidth={1} /></AddCell>
                <div>1</div>
                <div>Epic</div>
                <TitleCell>
                  <RowChevron size={14} strokeWidth={1.6} />
                  <CrownIcon />
                  <EpicLink>Gestión de Acceso y Registro de Usuarios</EpicLink>
                  <RowMore><Ellipsis size={16} strokeWidth={2.4} /></RowMore>
                </TitleCell>
                <StateCell><StateDot $c="#0078d4" />In Progress</StateCell>
                <div />
                <div />
                <div>Business</div>
                <div />
              </Row>

              {features.map((f) => (
                <Row key={f.title}>
                  <div />
                  <div />
                  <div>Feature</div>
                  <TitleCell $child><TrophyIcon /><FeatureTitle>{f.title}</FeatureTitle></TitleCell>
                  <StateCell><StateDot $c={stateColor(f.state)} />{f.state}</StateCell>
                  <div>{f.effort}</div>
                  <div />
                  <div>Business</div>
                  <div />
                </Row>
              ))}
            </Table>

            <HScroll>
              <ScrollArrow $dir="l" />
              <ScrollThumb />
              <ScrollArrow $dir="r" />
            </HScroll>
          </Main>
        </Body>
      </Page>

      <Taskbar>
        <TaskSlot $w={51}><WindowsIcon /></TaskSlot>
        <TaskSlot $open><EdgeIcon /></TaskSlot>
        <TaskSlot><FolderIcon /></TaskSlot>
        <TaskSlot><StudioIcon /></TaskSlot>
        <TaskSlot><DbToolIcon /></TaskSlot>
        <TaskSlot $w={49}><TeamsIcon /></TaskSlot>
        <TaskSlot $w={48} $on $open><SnipIcon /></TaskSlot>
        <TaskSlot><WordIcon /></TaskSlot>
        <TaskSlot $open><VsCodeIcon /></TaskSlot>
        <Tray>
          <TrayIcon $w={24}><ChevronUp size={22} strokeWidth={1} /></TrayIcon>
          <TrayIcon $w={25}><BatteryIcon /></TrayIcon>
          <TrayIcon $w={24}><WifiIcon /></TrayIcon>
          <TrayIcon $w={24}><SpeakerIcon /></TrayIcon>
          <TrayIcon $w={33}>ESP</TrayIcon>
          <Clock>
            <span>2:57 p. m.</span>
            <span>6/12/2023</span>
          </Clock>
          <Notice><NoticeIcon /></Notice>
        </Tray>
      </Taskbar>
    </Screen>
  );
}
